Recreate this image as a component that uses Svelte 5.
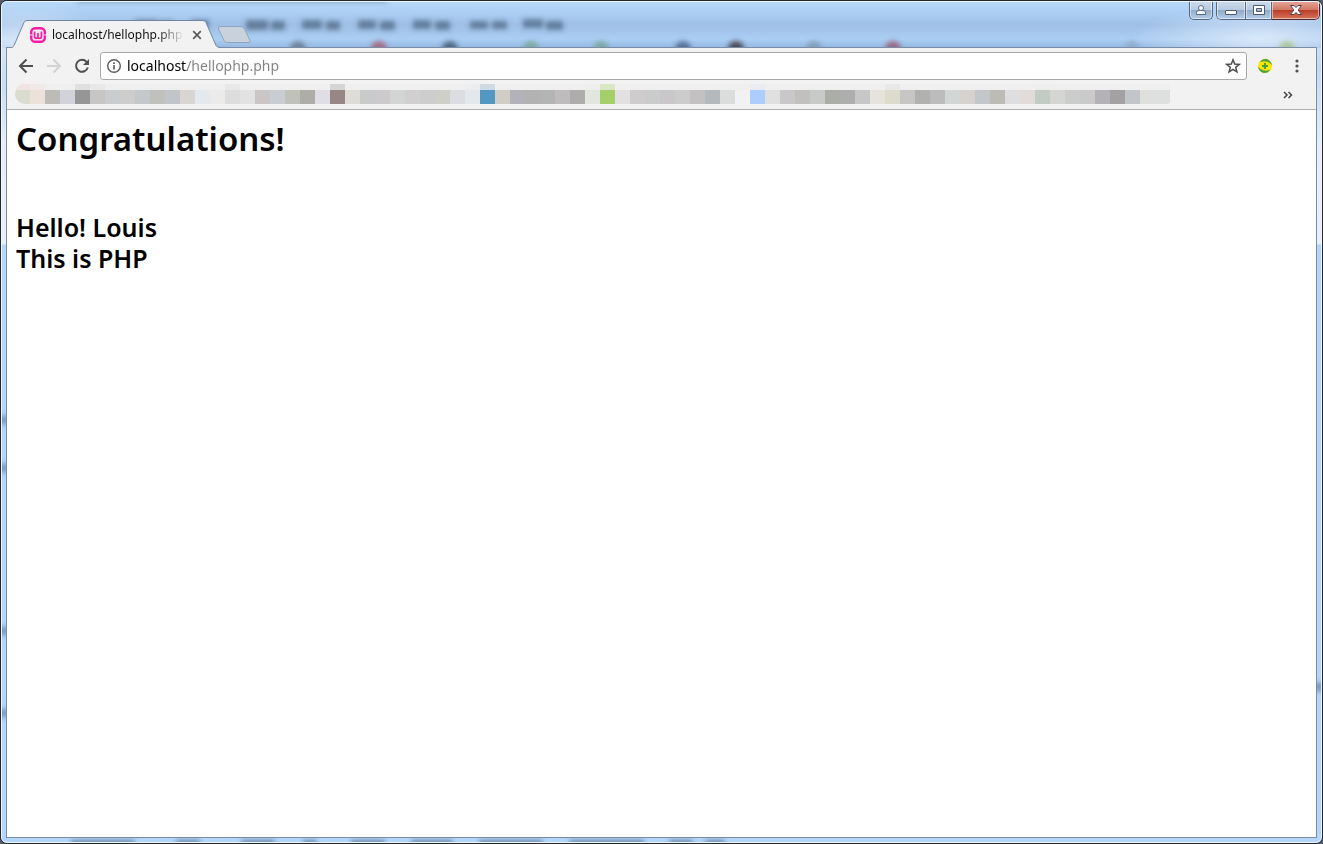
<script lang="ts">
    let address = $state("localhost/hellophp.php");

    const bookmarks = [
        "#dadccf", "#ebe3d9", "#bcbbb5", "#d2d3da", "#969696", "#c8c6c5", "#cacdd0", "#cdcdcc", "#c5c8cb", "#c0c0bd",
        "#c1c4c8", "#d9d5d2", "#e4e9ee", "#ebebeb", "#dddddd", "#e2e2e2", "#cac6c6", "#c7cdd2", "#c0c1bb", "#aeada8",
        "#e0dee4", "#968685", "#dedcd7", "#c8cbca", "#cccacd", "#d3d5d4", "#d1cfd0", "#cdcdcd", "#cecfc9", "#dcdde0",
        "#e2e8ec", "#5398c3", "#d0ccc6", "#b3b2b8", "#b2b2b3", "#b2b5b4", "#bebcbd", "#aeadab", "#e1e6df", "#a6cf6b",
        "#e2e0e3", "#cecccd", "#cacccb", "#c9c7c9", "#cccccd", "#c3c1c1", "#b3b9bc", "#dadddb", "#f2f2f2", "#adccff",
        "#e0e0e0", "#c9c7ca", "#c2bfbf", "#c8caca", "#acada7", "#acafae", "#c7c7c8", "#e6e3dc", "#dddbcb", "#c7c6c4",
        "#b1b1af", "#bcbcbc", "#d2d6d5", "#d6d3ce", "#c3c7ca", "#bcbbb5", "#dedee0", "#e1dcda", "#c3cbc5", "#d5d5d3",
        "#cbcdcc", "#cacaca", "#b4b2b7", "#a3a1a2", "#c2c6ca", "#dfdfdd", "#dee0e0",
    ];

    // lighter strip above the row, by cell index
    const tops: Record<number, string> = {
        0: "#f2e3e3", 1: "#f0e9e8", 4: "#e0e0e0", 5: "#e8e8e8", 14: "#e8e8e8", 21: "#d5d5d5", 30: "#ebedef",
        31: "#ccdbe6", 38: "#eeeeec", 39: "#dae7c5", 49: "#ebebf3", 58: "#e8e8e8", 68: "#eeeeec",
    };

    // what shows through the glass: x, y, width, height
    const menuSmudges = [
        [134, 19, 22, 9], [158, 20, 14, 9], [190, 19, 18, 8], [245, 19, 22, 10], [270, 20, 14, 9], [301, 19, 20, 9],
        [325, 20, 14, 9], [357, 19, 18, 9], [379, 20, 15, 9], [412, 19, 18, 9], [434, 20, 15, 9], [469, 20, 18, 8],
        [491, 20, 15, 8], [522, 18, 20, 9], [545, 20, 17, 9],
    ];
    const iconSmudges: [number, string][] = [
        [297, "#5b6b80"], [378, "#a8485a"], [449, "#35465c"], [530, "#6f9f8a"], [600, "#6f9f8a"], [682, "#3b5478"],
        [735, "#2b1a1c"], [813, "#7594aa"], [892, "#984a5a"], [1131, "#8aa8c4"], [1286, "#a5bd78"],
    ];
    const sideSmudges = [[2, 419], [2, 467], [2, 630], [2, 712], [1318, 686]];
    const footSmudges = [
        [70, 64], [175, 24], [240, 34], [302, 14], [350, 34], [410, 42], [478, 64], [568, 75], [668, 24], [704, 20],
    ];
</script>

<div class="window">
    <svg class="glass" aria-hidden="true">
        <defs>
            <filter id="soft" x="-20%" y="-50%" width="140%" height="200%">
                <feGaussianBlur stdDeviation="2.5" />
            </filter>
            <radialGradient id="glow">
                <stop offset="0" stop-color="#e4effb" stop-opacity="0.8" />
                <stop offset="1" stop-color="#e4effb" stop-opacity="0" />
            </radialGradient>
        </defs>
        <ellipse cx="20" cy="44" rx="90" ry="44" fill="url(#glow)" />
        <ellipse cx="1260" cy="38" rx="130" ry="34" fill="url(#glow)" />
        <g filter="url(#soft)">
            <rect x="76" y="-5" width="310" height="7" fill="#536f91" opacity="0.45" />
            {#each menuSmudges as [x, y, w, h]}
                <rect {x} {y} width={w} height={h} fill="#32475f" opacity="0.55" />
            {/each}
            {#each iconSmudges as [x, color]}
                <circle cx={x} cy="48" r="8" fill={color} opacity="0.7" />
            {/each}
            {#each sideSmudges as [x, y]}
                <circle cx={x} cy={y} r="5" fill="#4a6b96" opacity="0.6" />
            {/each}
        </g>
    </svg>
    <svg class="glass-foot" aria-hidden="true">
        <g filter="url(#soft)">
            {#each footSmudges as [x, w]}
                <rect {x} y="3" width={w} height="6" fill="#3c536f" opacity="0.6" />
            {/each}
        </g>
    </svg>

    <header class="titlebar">
        <div class="tabs">
            <div class="tab">
                <svg class="tab-shape" viewBox="0 0 210 29" aria-hidden="true">
                    <path d="M0 27.5H1.5C3 27.5 3.5 26.5 4 25.5L14 2.5Q15 .5 17 .5H193Q195 .5 196 2.500L206 25.5Q207 27.5 210 27.5V29H0Z" fill="#f2f2f2" />
                    <path d="M0 27.5H1.5C3 27.5 3.5 26.5 4 25.5L14 2.5Q15 .5 17 .5H193Q195 .5 196 2.5L206 25.5Q207 27.5 210 27.5" fill="none" stroke="#7186a3" />
                </svg>
                <svg class="favicon" width="16" height="16" viewBox="0 0 16 16" aria-hidden="true">
                    <rect x="1.2" y="1.2" width="13.6" height="13.6" rx="4" fill="none" stroke="#f81aa5" stroke-width="2.400" />
                    <path d="M4.600 4.500V9.500Q4.600 11.300 6.300 11.300Q8 11.300 8 9.500V6V9.500Q8 11.300 9.700 11.300Q11.400 11.300 11.400 9.500V4.500" fill="none" stroke="#f81aa5" stroke-width="1.700" />
                    <path d="M0 7.500h2.400v1H0zM13.600 7.500H16v1h-2.400z" fill="#fbd0ea" />
                </svg>
                <button class="tab-title" type="button">localhost/hellophp.php</button>
                <button class="tab-close" type="button" aria-label="Close tab">
                    <svg width="10" height="10" viewBox="0 0 10 10"><path d="M1.2 1.2l7.6 7.6M8.8 1.2L1.2 8.8" stroke="#5a5a5a" stroke-width="1.7" /></svg>
                </button>
            </div>
            <button class="new-tab" type="button" aria-label="New tab">
                <svg width="35" height="18" viewBox="0 0 35 18">
                    <path d="M3 .5H24Q26.5 .5 27.5 3L33 14.5Q34 16.5 32 16.5H10.500Q8 16.5 7 14.5L1.5 3Q.5 .5 3 .5Z" fill="#c8d1dc" stroke="#8ea5c2" />
                </svg>
            </button>
        </div>

        <div class="window-controls">
            <button class="control user" type="button" aria-label="Profile">
                <svg width="12" height="12" viewBox="0 0 12 12">
                    <path d="M1.5 10.500V8.500Q1.500 6.500 4 6.500H8Q10.500 6.500 10.500 8.500V10.500Z" fill="#f5f8fc" stroke="#5a6c85" />
                    <circle cx="6" cy="4" r="2.500" fill="#f5f8fc" stroke="#5a6c85" />
                </svg>
            </button>
            <div class="control-group">
                <button class="control min" type="button" aria-label="Minimize">
                    <svg width="14" height="12" viewBox="0 0 14 12"><rect x="1.5" y="6.5" width="11" height="4" rx=".5" fill="#fff" stroke="#505a6b" /></svg>
                </button>
                <button class="control max" type="button" aria-label="Maximize">
                    <svg width="14" height="12" viewBox="0 0 14 12"><path fill-rule="evenodd" d="M1.5 1.5h11v9h-11zM4.500 4.500v3h5v-3z" fill="#fff" stroke="#505a6b" /></svg>
                </button>
                <button class="control close" type="button" aria-label="Close">
                    <svg width="14" height="12" viewBox="0 0 14 12"><path d="M1.5 1.5H5L7 3.5 9 1.5H12.5L9.2 6 12.5 10.5H9L7 8.5 5 10.5H1.5L4.8 6Z" fill="#fff" stroke="#5a414b" /></svg>
                </button>
            </div>
        </div>
    </header>

    <div class="client">
        <nav class="toolbar" aria-label="Navigation">
            <button class="tool" type="button" aria-label="Back">
                <svg width="16" height="16" viewBox="0 0 16 16"><path d="M15 8H2.5M8.5 1.5L2 8l6.5 6.5" fill="none" stroke="#505050" stroke-width="2" /></svg>
            </button>
            <button class="tool" type="button" aria-label="Forward" disabled>
                <svg width="16" height="16" viewBox="0 0 16 16"><path d="M1 8H13.5M7.5 1.5L14 8l-6.5 6.5" fill="none" stroke="#d2d2d2" stroke-width="2" /></svg>
            </button>
            <button class="tool" type="button" aria-label="Reload">
                <svg width="16" height="16" viewBox="0 0 16 16">
                    <path d="M12.6 3.8A6 6 0 1 0 13.8 9.5" fill="none" stroke="#505050" stroke-width="2" />
                    <path d="M15 1V7H9Z" fill="#505050" />
                </svg>
            </button>

            <div class="omnibox">
                <svg width="16" height="16" viewBox="0 0 16 16" aria-hidden="true">
                    <circle cx="8" cy="8" r="6.3" fill="none" stroke="#5a5a5a" stroke-width="1.4" />
                    <path d="M7.2 7h1.6v4.500H7.2zM7.2 4.300h1.6v1.600H7.2z" fill="#5a5a5a" />
                </svg>
                <input class="address" type="text" aria-label="Address" spellcheck="false" bind:value={address} />
                <button class="star" type="button" aria-label="Bookmark this page">
                    <svg width="16" height="16" viewBox="0 0 16 16"><path d="M8 1.8L9.7 6.1 14.3 6.4 10.7 9.3 11.9 13.8 8 11.3 4.1 13.8 5.3 9.3 1.7 6.4 6.3 6.1Z" fill="none" stroke="#505050" stroke-width="1.5" /></svg>
                </button>
            </div>

            <button class="extension" type="button" aria-label="Extension">
                <svg width="16" height="16" viewBox="0 0 16 16">
                    <circle cx="8" cy="8" r="7" fill="#fce803" />
                    <path d="M3.500 3.500Q6 .8 9.500 1.300Q13 2 14.600 6.500Q10.500 1.800 3.500 3.500ZM12.500 12.500Q10 15.200 6.500 14.700Q3 14 1.400 9.500Q5.500 14.200 12.500 12.500Z" fill="#4e9d3d" stroke="#4e9d3d" stroke-width=".6" />
                    <path d="M7 5h2v2h2v2H9v2H7V9H5V7h2z" fill="#4e9d3d" />
                </svg>
            </button>
            <button class="menu" type="button" aria-label="Menu">
                <svg width="16" height="16" viewBox="0 0 16 16" fill="#505050"><circle cx="8" cy="3" r="1.6" /><circle cx="8" cy="8" r="1.6" /><circle cx="8" cy="13" r="1.6" /></svg>
            </button>
        </nav>

        <div class="bookmark-bar">
            <div class="mosaic" aria-hidden="true">
                {#each bookmarks as color, i}
                    <span class="cell" style:background={color} style:border-top-color={tops[i] ?? "#efefef"}></span>
                {/each}
            </div>
            <button class="overflow" type="button" aria-label="More bookmarks">
                <svg width="10" height="8" viewBox="0 0 10 8"><path d="M1 1l3 3-3 3M5.5 1l3 3-3 3" fill="none" stroke="#454545" stroke-width="1.5" /></svg>
            </button>
        </div>

        <main class="page">
            <h1>Congratulations!</h1>
            <h2>Hello! Louis<br />This is PHP</h2>
        </main>
    </div>
</div>

<style>
    :global(body) {
        margin: 0;
        background: #555b68;
    }

    button {
        padding: 0;
        border: 0;
        background: none;
        font: inherit;
    }

    svg {
        display: block;
    }

    .window {
        position: relative;
        display: flex;
        flex-direction: column;
        box-sizing: border-box;
        min-height: 100vh;
        overflow: hidden;
        border: 1px solid #23252f;
        border-radius: 7px;
        background:
            linear-gradient(#b7dafb 0, #a9cbf0 15px, #9fbfe6 24px, #abcef3 38px, #95b8e2 47px, transparent 47px),
            linear-gradient(#b9d3ef 48px, #e4edf8 140px, #e6effa 243px, #b3d6fa 244px);
        font-family: "Noto Sans", "Open Sans", sans-serif;
    }

    .window::after {
        content: "";
        position: absolute;
        inset: 0;
        border: 1px solid #eef6ff;
        border-radius: 6px;
        pointer-events: none;
    }

    .glass {
        position: absolute;
        inset: 0;
        width: 100%;
        height: 100%;
    }

    .glass-foot {
        position: absolute;
        bottom: 0;
        left: 0;
        width: 100%;
        height: 6px;
    }

    .titlebar {
        position: relative;
        display: flex;
        justify-content: space-between;
        align-items: flex-start;
        height: 46px;
        padding: 0 2px 0 9px;
    }

    .tabs {
        display: flex;
        align-self: flex-end;
        z-index: 1;
        margin-bottom: -2px;
    }

    .tab {
        position: relative;
        display: flex;
        align-items: center;
        box-sizing: border-box;
        width: 210px;
        height: 29px;
        padding: 0 18px 0 20px;
    }

    .tab-shape {
        position: absolute;
        inset: 0;
        width: 100%;
        height: 100%;
    }

    .favicon,
    .tab-title,
    .tab-close {
        position: relative;
        flex: none;
    }

    .tab-title {
        flex: 1;
        min-width: 0;
        margin: 0 8px 0 6px;
        overflow: hidden;
        color: #111;
        font-size: 12px;
        line-height: 20px;
        text-align: left;
        white-space: nowrap;
        mask-image: linear-gradient(90deg, #000 80%, transparent);
    }

    .new-tab {
        align-self: flex-start;
        margin: 6px 0 0 -3px;
    }

    .window-controls {
        display: flex;
        gap: 3px;
    }

    .control-group {
        display: flex;
        overflow: hidden;
        border-radius: 0 0 5px 5px;
    }

    .control {
        display: flex;
        align-items: center;
        justify-content: center;
        box-sizing: border-box;
        height: 19px;
        border: 1px solid #56677f;
        border-top: 0;
        background: linear-gradient(#cddcec 0, #b7cae0 9px, #90a9c6 9px, #b3cce8 100%);
        box-shadow: inset 0 0 0 1px rgba(255, 255, 255, 0.5);
    }

    .user {
        width: 24px;
        border-radius: 0 0 5px 5px;
    }

    .min {
        width: 29px;
        border-right: 0;
        border-radius: 0 0 0 5px;
    }

    .max {
        width: 27px;
    }

    .close {
        width: 48px;
        border-color: #52262d;
        border-left: 0;
        border-radius: 0 0 5px 0;
        background: linear-gradient(#e6a99c 0, #d07763 9px, #b93c28 9px, #d5735a 100%);
    }

    .client {
        position: relative;
        display: flex;
        flex: 1;
        flex-direction: column;
        margin: 0 5px 5px;
        border: 1px solid #7a8ca6;
        background: #fff;
    }

    .toolbar {
        display: flex;
        align-items: center;
        height: 36px;
        padding: 0 11px;
        background: #f2f2f2;
    }

    .tool {
        margin-right: 12px;
    }

    .tool:nth-child(3) {
        margin-right: 10px;
    }

    .omnibox {
        display: flex;
        flex: 1;
        align-items: center;
        box-sizing: border-box;
        min-width: 0;
        height: 28px;
        padding: 0 5px;
        border: 1px solid #a9a9a9;
        border-radius: 3px;
        background: #fff;
    }

    .address {
        flex: 1;
        min-width: 0;
        height: 24px;
        padding: 0 0 2px;
        margin: 0 5px;
        box-sizing: border-box;
        border: 0;
        outline: 0;
        /* host in black, path in grey */
        background: linear-gradient(90deg, #000 60px, #808080 60px);
        background-clip: text;
        -webkit-text-fill-color: transparent;
        font-family: inherit;
        font-size: 14px;
    }

    .extension {
        margin-left: 10px;
    }

    .menu {
        margin-left: 16px;
    }

    .bookmark-bar {
        display: flex;
        align-items: flex-start;
        justify-content: space-between;
        box-sizing: border-box;
        height: 26px;
        padding: 0 23px 0 8px;
        border-bottom: 1px solid #b2b2b2;
        background: #f2f2f2;
    }

    .mosaic {
        display: flex;
        min-width: 0;
        overflow: hidden;
        border-radius: 10px 3px 3px 10px;
    }

    .cell {
        flex: none;
        width: 15px;
        height: 14px;
        border-top: 6px solid;
    }

    .overflow {
        margin-top: 7px;
    }

    .page {
        flex: 1;
        padding: 5px 9px;
        color: #000;
    }

    h1,
    h2 {
        margin: 0;
        font-weight: 600;
    }

    h1 {
        font-size: 33px;
        line-height: 48px;
    }

    h2 {
        margin-top: 49px;
        font-size: 25px;
        line-height: 31px;
    }
</style>
